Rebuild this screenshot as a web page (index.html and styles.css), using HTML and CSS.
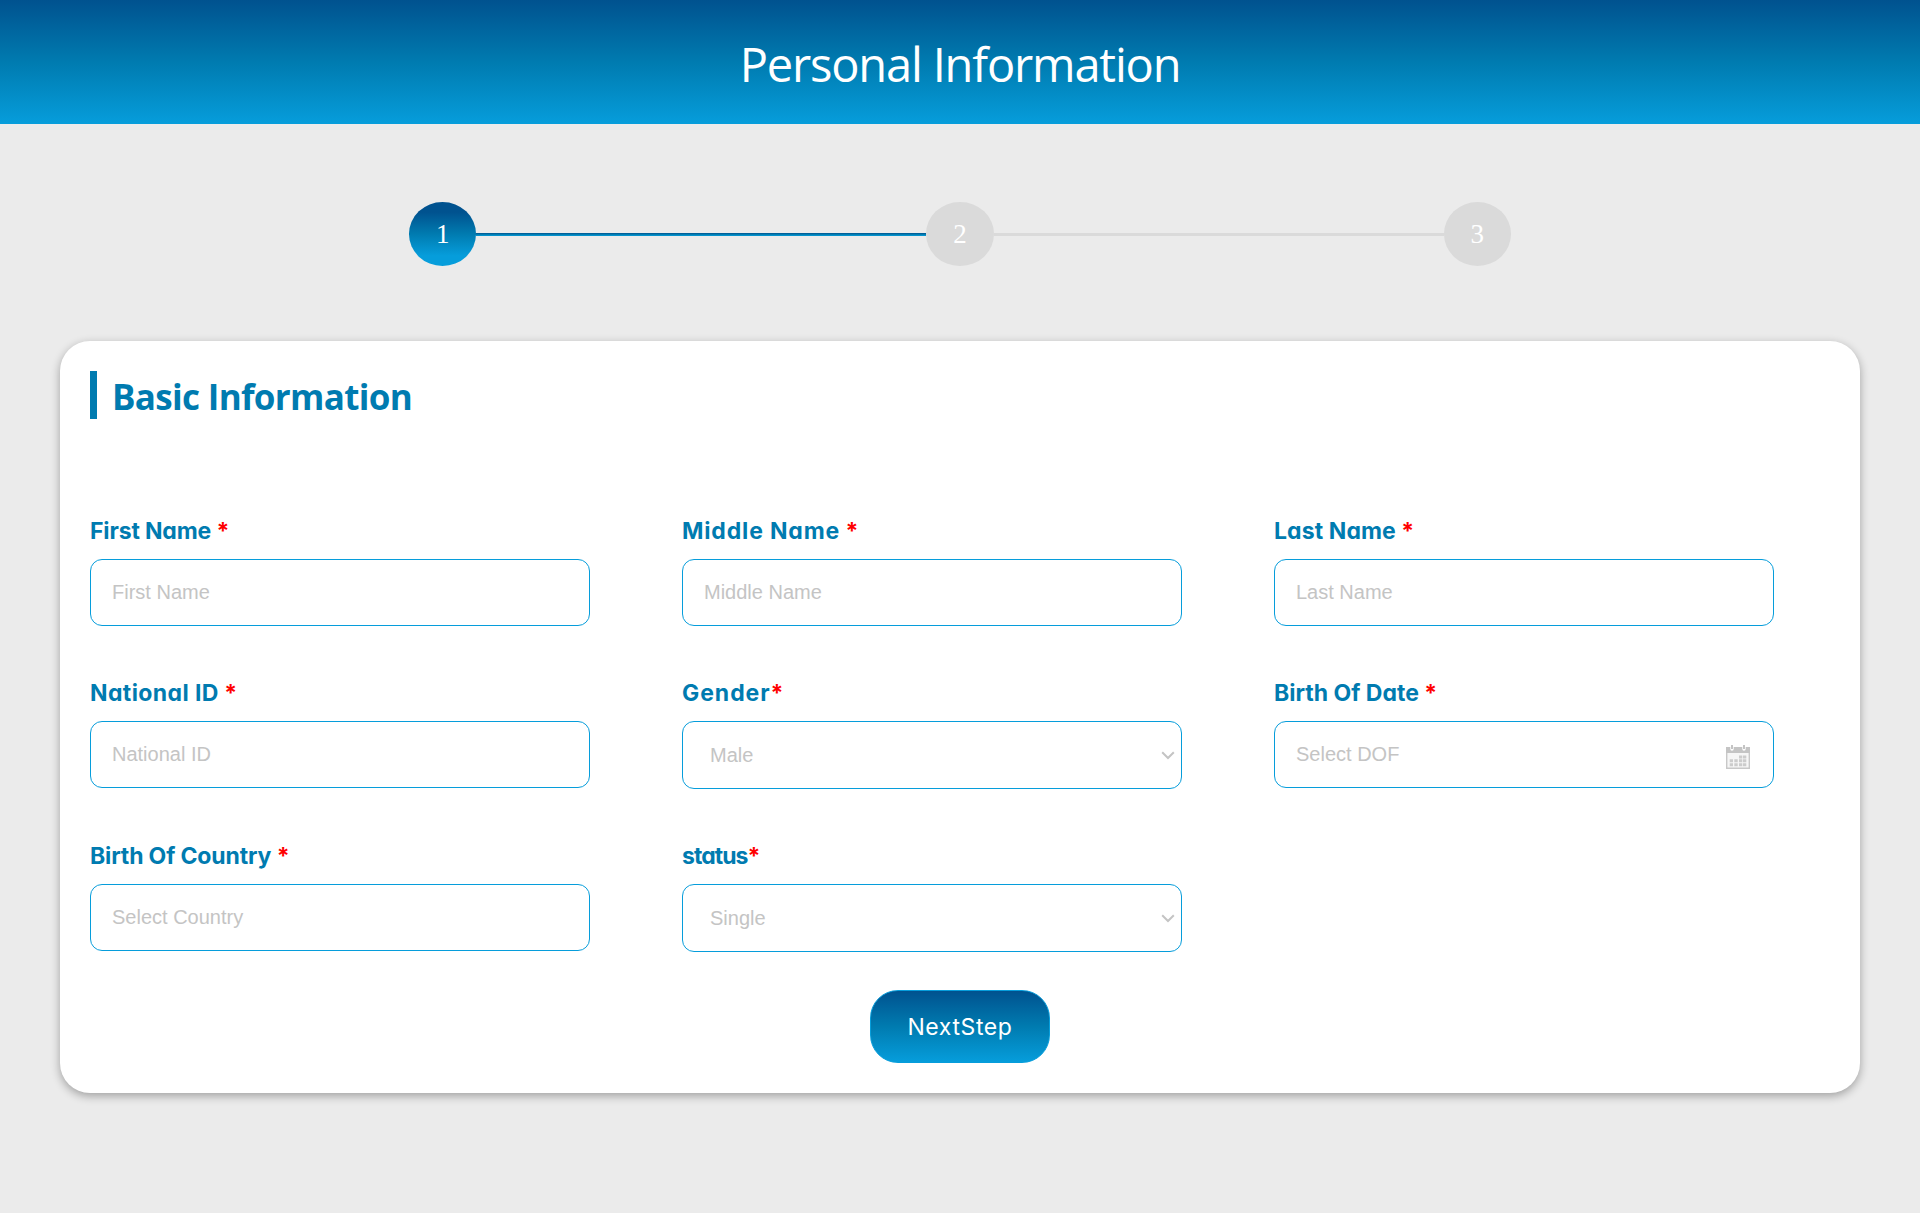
FILE: index.html
```html
<!DOCTYPE html>
<html lang="en">
<head>
<meta charset="utf-8">
<title>Personal Information</title>
<link rel="stylesheet" href="styles.css">
</head>
<body>
<header class="banner"><h1 class="banner-title">Personal Information</h1></header>
<main>
  <div class="steps">
    <span class="step active">1</span>
    <span class="line active"></span>
    <span class="step">2</span>
    <span class="line"></span>
    <span class="step">3</span>
  </div>
  <form class="card">
    <h2 class="card-title">Basic Information</h2>
    <div class="fields">
      <div class="field"><label class="label" for="first"><span class="first-name">First Name</span> <span class="req">*</span></label><input class="control" id="first" placeholder="First Name"></div>
      <div class="field"><label class="label" for="middle"><span class="middle-name">Middle Name</span> <span class="req">*</span></label><input class="control" id="middle" placeholder="Middle Name"></div>
      <div class="field"><label class="label" for="last"><span class="last-name">Last Name</span> <span class="req">*</span></label><input class="control" id="last" placeholder="Last Name"></div>
      <div class="field"><label class="label" for="nid"><span class="national-id">National ID</span> <span class="req">*</span></label><input class="control" id="nid" placeholder="National ID"></div>
      <div class="field"><label class="label" for="gender"><span class="gender">Gender</span><span class="req">*</span></label>
        <div class="control-wrap"><select class="control select" id="gender"><option>Male</option></select><svg class="chevron" viewBox="0 0 14 9"><path d="M1.2 1.2 7 7l5.8-5.8"/></svg></div></div>
      <div class="field"><label class="label" for="dob"><span>Birth Of Date</span> <span class="req">*</span></label>
        <div class="control-wrap"><input class="control" id="dob" placeholder="Select DOF"><svg class="calendar" viewBox="0 0 24 24"><path class="cal-frame" d="M.7 7v16.300h22.600V7z"/><path class="cal-head" d="M0 2h4.300v2a1.700 1.700 0 0 0 3.400 0V2h8.600v2a1.700 1.700 0 0 0 3.400 0V2H24v6H0zM5 0h2v4H5zM17 0h2v4h-2z"/><path class="cal-days" d="M13 10.500h3.300v3h-3.300zM17 10.500h3.300v3H17zM3.700 14.300H7v3H3.700zM8.300 14.300h3.400v3H8.300zM13 14.300h3.300v3H13zM17 14.300h3.300v3H17zM3.700 18.200H7v3H3.700zM8.300 18.200h3.400v3H8.300zM13 18.200h3.300v3H13zM17 18.200h3.300v3H17z"/></svg></div></div>
      <div class="field"><label class="label" for="country"><span class="birth-country">Birth Of Country</span> <span class="req">*</span></label><input class="control" id="country" placeholder="Select Country"></div>
      <div class="field"><label class="label" for="status"><span class="status">status</span><span class="req">*</span></label>
        <div class="control-wrap"><select class="control select" id="status"><option>Single</option></select><svg class="chevron" viewBox="0 0 14 9"><path d="M1.2 1.2 7 7l5.8-5.8"/></svg></div></div>
    </div>
    <button class="next" type="button">NextStep</button>
  </form>
</main>
</body>
</html>
```
FILE: styles.css
```css
* { box-sizing: border-box; }
body { margin: 0; min-height: 1213px; background: #ebebeb; font-family: "Liberation Sans", Arial, sans-serif; }

.banner { height: 124px; display: flex; justify-content: center; background: linear-gradient(#00528f, #007bb0 50%, #069ddb); }
.banner-title { margin: 32px 0 0; font: 400 47px/64px "Open Sans", sans-serif; letter-spacing: -1.17px; color: #fff; }

.steps { width: 1102px; margin: 78px auto 0; display: flex; align-items: center; }
.step { width: 67.33px; height: 64px; border-radius: 50%; background: #dadada; color: #fff; font: 27px/65px "Liberation Serif", serif; text-align: center; }
.line { flex: 1; height: 3px; background: #dadada; }
.step.active { background: linear-gradient(#00528f 16%, #007bb0 50%, #069ddb 84%); }
.line.active { background: linear-gradient(#00528f, #007bb0 50%, #069ddb); }

.card { width: 1800px; height: 752px; margin: 75px auto 0; padding: 30px; border-radius: 30px; background: #fff; box-shadow: 0 3px 10px rgba(0, 0, 0, .32); }
.card-title { margin: 0; padding-left: 15px; border-left: 7px solid #007bb0; font: 700 35px/52px "Open Sans", sans-serif; letter-spacing: -.68px; height: 48px; color: #007bb0; }

.fields { margin-top: 93px; display: grid; grid-template-columns: repeat(3, 500px); grid-template-rows: 162px 163px 162px; column-gap: 92px; }
.label { display: block; height: 47px; font: 700 23px/38px Inter, "Open Sans", sans-serif; font-feature-settings: "cv11"; color: #007bb0; white-space: nowrap; }
.first-name { letter-spacing: -.15px; }
.middle-name { letter-spacing: .85px; }
.last-name { letter-spacing: .1px; }
.national-id { letter-spacing: .4px; }
.gender { letter-spacing: .95px; }
.birth-country { letter-spacing: -.15px; }
.status { letter-spacing: -.95px; }
.req { color: #f00; }

.control { display: block; width: 500px; height: 67px; margin: 0; padding: 0 21px; border: 1px solid #069ddb; border-radius: 12px; background: #fff; font: 20px "Liberation Sans", Arial, sans-serif; color: #c4c4c4; outline: none; }
.control::placeholder { color: #c4c4c4; opacity: 1; }
.select { height: 68px; padding: 0 27px; appearance: none; }
.control-wrap { position: relative; }
.chevron { position: absolute; right: 7px; top: 30px; width: 14px; height: 9px; fill: none; stroke: #c4c4c4; stroke-width: 2; }
.calendar { position: absolute; right: 24px; top: 24px; width: 24px; height: 24px; }
.cal-frame { fill: #f6f6f6; stroke: #c8c8c8; stroke-width: 1.4; }
.cal-head { fill: #c4c4c4; }
.cal-days { fill: #ccc; }

.next { display: block; width: 180px; height: 73px; margin: -9px auto 0; padding: 1px 0 0; border: 1px solid #069ddb; border-radius: 28px; background: linear-gradient(#00528f, #007bb0 50%, #069ddb); color: #fff; font: 400 23px/1 Inter, "Open Sans", sans-serif; font-feature-settings: "cv11"; letter-spacing: .6px; }
```
